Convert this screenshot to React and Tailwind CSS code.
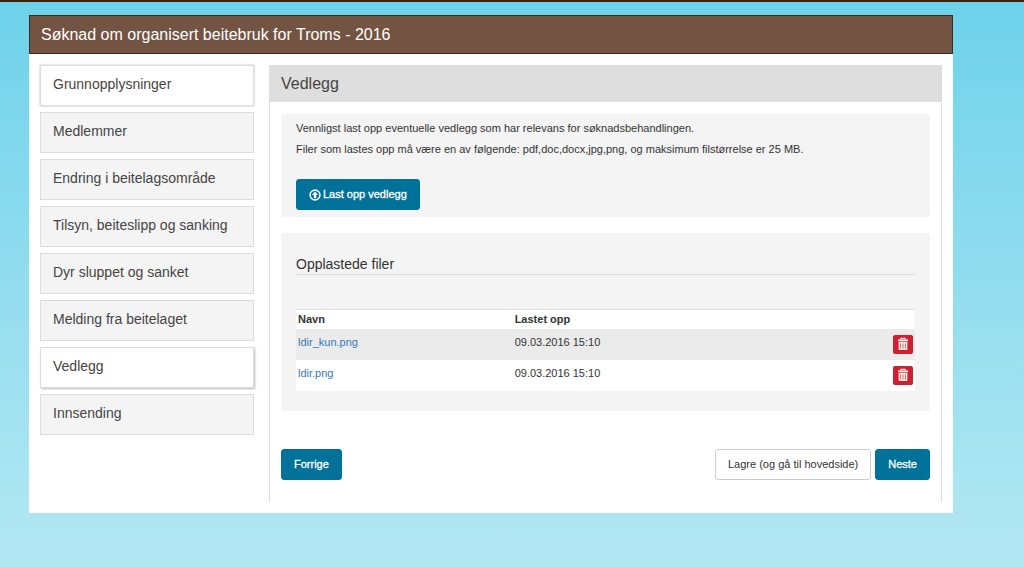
const steps = [
  { id: 1, label: "Grunnopplysninger", done: true },
  { id: 2, label: "Medlemmer" },
  { id: 3, label: "Endring i beitelagsområde" },
  { id: 4, label: "Tilsyn, beiteslipp og sanking" },
  { id: 5, label: "Dyr sluppet og sanket" },
  { id: 6, label: "Melding fra beitelaget" },
  { id: 7, label: "Vedlegg", current: true },
  { id: 8, label: "Innsending" },
];

const files = [
  { name: "ldir_kun.png", uploaded: "09.03.2016 15:10" },
  { name: "ldir.png", uploaded: "09.03.2016 15:10" },
];

function UploadIcon() {
  return (
    <svg viewBox="0 0 12 12" className="h-3 w-3" aria-hidden="true">
      <circle cx="6" cy="6" r="4.9" fill="none" stroke="currentColor" strokeWidth="1.6" />
      <path d="M6 2.5 9 6H7.2v3H4.8V6H3z" fill="currentColor" />
    </svg>
  );
}

function TrashIcon() {
  return (
    <svg viewBox="0 0 12 14" className="h-3.5 w-3" aria-hidden="true">
      <path d="M4 2.6V1.4h4v1.2" fill="none" stroke="currentColor" strokeWidth="1.2" />
      <path d="M1 2.4h10v1.8H1z" fill="currentColor" />
      <path
        fillRule="evenodd"
        d="M1.6 4.8h8.8v7.5q0 .7-.7.7H2.3q-.7 0-.7-.7zM3.4 6.4v5h.6v-5zM5.7 6.4v5h.6v-5zM8 6.4v5h.6v-5z"
        fill="currentColor"
      />
    </svg>
  );
}

function StepLink({ step }) {
  const base = "block border px-3 pt-2 pb-[11px] text-sm leading-5 text-[#444]";
  let look = "border-[#dcdcdc] bg-[#f4f4f4]";
  if (step.done) look = "border-[#ddd] bg-white shadow-[0_0_2px_#bbb]";
  if (step.current) look = "border-[#ddd] bg-white shadow-[1px_1px_2px_#bbb]";

  return (
    <li>
      <a href="#" aria-current={step.current ? "step" : undefined} className={`${base} ${look}`}>
        {step.label}
      </a>
    </li>
  );
}

function Button({ primary, children }) {
  const look = primary
    ? "border-[#00729a] bg-[#00729a] text-white [-webkit-text-stroke:0.3px_white]"
    : "border-[#ccc] bg-white text-[#333]";

  return (
    <button
      type="button"
      className={`flex items-center gap-0.5 rounded-[3px] border px-3 py-1.5 text-[11px] leading-[17px] ${look}`}
    >
      {children}
    </button>
  );
}

function FileTable() {
  return (
    <table className="w-full border-t border-[#ddd] bg-white text-left text-[11px] leading-4">
      <thead>
        <tr>
          <th className="w-[35%] px-0.5 pt-px pb-0.5">Navn</th>
          <th className="px-0.5 pt-px pb-0.5">Lastet opp</th>
          <th className="w-6" aria-label="Slett"></th>
        </tr>
      </thead>
      <tbody>
        {files.map((file) => (
          <tr key={file.name} className="odd:bg-[#ebebeb]">
            <td className="px-0.5 py-[5px] align-top">
              <a href="#" className="text-[#337ab7]">{file.name}</a>
            </td>
            <td className="px-0.5 py-[5px] align-top">{file.uploaded}</td>
            <td className="px-0.5 py-1.5">
              <button
                type="button"
                aria-label={`Slett ${file.name}`}
                className="ml-auto flex h-[19px] w-5 justify-center rounded-xs bg-[#d01f30] pt-0.5 text-[#fde8e0]"
              >
                <TrashIcon />
              </button>
            </td>
          </tr>
        ))}
      </tbody>
    </table>
  );
}

function App() {
  return (
    <div className="min-h-screen border-t-2 border-[#3b2314] bg-linear-to-b from-[#6dd2ea] to-[#b3e8f3] pt-[13px] pr-[71px] pb-[54px] pl-[29px] font-['Liberation_Sans',Arial,sans-serif] text-[#333]">
      <div className="bg-white">
        <header className="border border-[#3d2a20] bg-[#735341] px-[11px] py-2">
          <h1 className="text-base leading-[21px] text-white">
            Søknad om organisert beitebruk for Troms - 2016
          </h1>
        </header>

        <div className="flex gap-[15px] p-[11px]">
          <nav className="w-[214px] shrink-0" aria-label="Steg">
            <ul className="flex flex-col gap-1.5">
              {steps.map((step) => (
                <StepLink key={step.id} step={step} />
              ))}
            </ul>
          </nav>

          <main className="min-w-0 flex-1 border-x border-[#ddd]">
            <h2 className="bg-[#dedede] px-[11px] py-2 text-base leading-[21px] text-[#444]">Vedlegg</h2>

            <div className="px-[11px] pt-3 pb-[22px]">
              <section className="rounded-[3px] bg-[#f4f4f4] px-[15px] pt-1.5 pb-[7px]">
                <p className="mb-[5px] text-[11px] leading-4">
                  Vennligst last opp eventuelle vedlegg som har relevans for søknadsbehandlingen.
                </p>
                <p className="mb-[22px] text-[11px] leading-4">
                  Filer som lastes opp må være en av følgende: pdf,doc,docx,jpg,png, og maksimum filstørrelse er 25 MB.
                </p>
                <Button primary>
                  <UploadIcon />
                  Last opp vedlegg
                </Button>
              </section>

              <section className="mt-4 rounded-[3px] bg-[#f4f4f4] px-[15px] pt-[21px] pb-5">
                <h3 className="mb-[34px] border-b border-[#ddd] text-sm leading-5">Opplastede filer</h3>
                <FileTable />
              </section>

              <div className="mt-[38px] flex items-center gap-1">
                <Button primary>Forrige</Button>
                <div className="ml-auto flex gap-1">
                  <Button>Lagre (og gå til hovedside)</Button>
                  <Button primary>Neste</Button>
                </div>
              </div>
            </div>
          </main>
        </div>
      </div>
    </div>
  );
}

export default App;
